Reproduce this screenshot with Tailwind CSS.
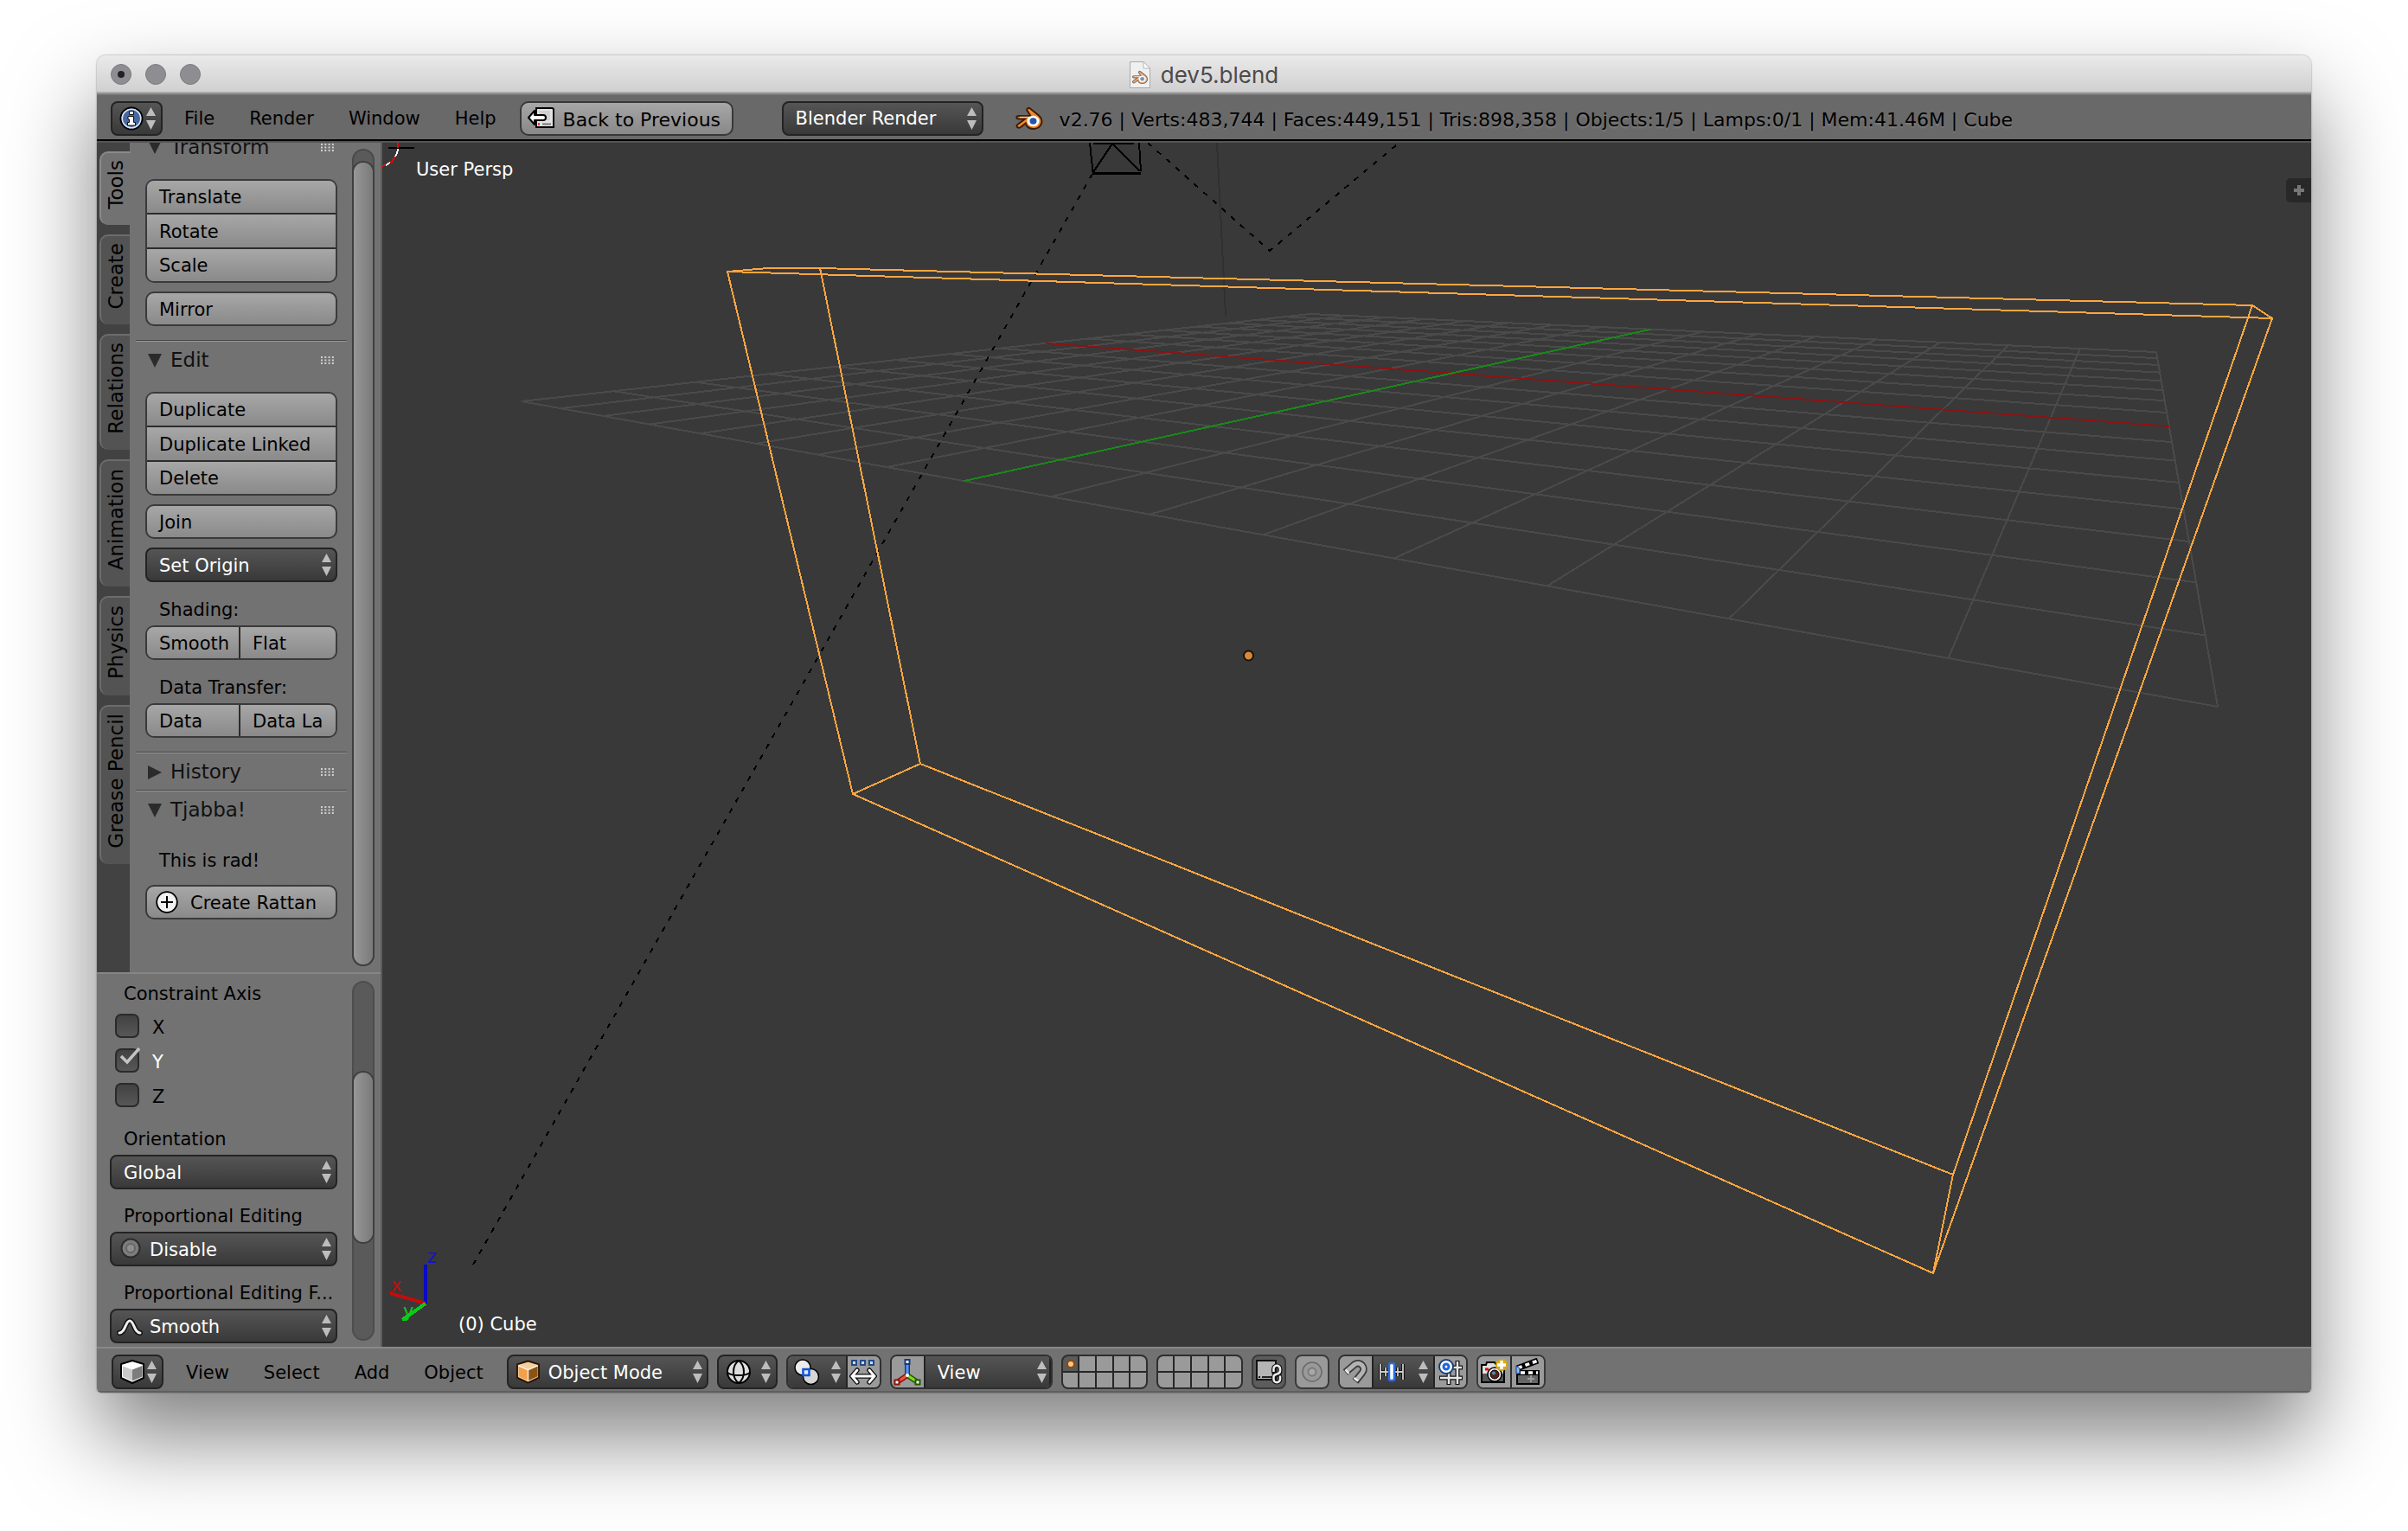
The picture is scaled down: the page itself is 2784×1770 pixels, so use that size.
<!DOCTYPE html>
<html lang="en">
  <head>
    <meta charset="UTF-8" />
    <title>dev5.blend</title>
    <script src="https://cdn.jsdelivr.net/npm/@tailwindcss/browser@4"></script>
  </head>
  <body class="min-h-screen bg-white font-['DejaVu_Sans',sans-serif] text-[21px] text-black">

    <!-- Shared shapes -->
    <svg class="hidden">
      <symbol id="arrows" viewBox="0 0 11 26">
        <path d="M5.5 0 11 10H0zM0 15h11L5.5 26z" fill="#bdbdbd" />
      </symbol>
      <symbol id="grip" viewBox="0 0 15 9">
        <path d="M0 1h15M0 4.5h15M0 8h15" stroke="#d0d0d0" stroke-width="2" stroke-dasharray="2 2.3" />
      </symbol>
      <symbol id="blender" viewBox="0 0 34 28">
        <path d="M18 2.500 28 10.500C32 14 32.500 19 29.500 22.500 26 27 18 27 14.500 23 13.500 22 13 20.500 12.800 19.500L7 24C4 26 1 23 3.500 21L12 14.500H5C1.500 14.500 1.500 11 5 11H18.500L15 5.500C13 3 16 .8 18 2.500Z" fill="#f5872b" stroke="#3b1d05" stroke-width="2" />
        <path d="M6 12.500h14" stroke="#ffc58a" stroke-width="1.500" />
        <ellipse cx="21.500" cy="17" rx="7" ry="6.200" fill="#fff" />
        <ellipse cx="21.500" cy="17" rx="4" ry="3.700" fill="#2456a6" />
      </symbol>
    </svg>

    <div class="min-h-screen overflow-hidden px-28 pt-16">
      <div class="flex h-[calc(100vh-224px)] flex-col overflow-hidden rounded-t-[10px] rounded-b-[5px] shadow-[0_50px_100px_rgba(0,0,0,0.5),0_0_2px_rgba(0,0,0,0.5)]">

        <!-- Title bar -->
        <header class="relative flex h-11 shrink-0 items-center justify-center gap-3 border-b-2 border-[#ababab] bg-linear-to-b from-[#ebeaeb] to-[#d0d0d0] pt-0.5">
          <div class="absolute left-4 flex gap-4">
            <button aria-label="Close" class="flex size-6 items-center justify-center rounded-full border border-[#7b7b7e] bg-[#8e8d91]"><span class="size-2 rounded-full bg-[#222]"></span></button>
            <button aria-label="Minimize" class="size-6 rounded-full border border-[#7b7b7e] bg-[#8e8d91]"></button>
            <button aria-label="Zoom" class="size-6 rounded-full border border-[#7b7b7e] bg-[#8e8d91]"></button>
          </div>
          <svg class="h-[31px] w-6" viewBox="0 0 24 31">
            <path d="M.5.500H16L23.500 8V30.500H.5z" fill="#f0f0f0" stroke="#a9a9a9" />
            <path d="M16 .5V8h7.500z" fill="#fff" stroke="#b5b5b5" />
            <use href="#blender" x="2" y="10" width="20" height="17" opacity="0.6" />
          </svg>
          <h1 class="font-['Inter',sans-serif] text-[26px] text-[#4b4a4c]">dev5.blend</h1>
        </header>

        <!-- Info header -->
        <div class="flex h-[55px] shrink-0 items-center border-t-2 border-b-2 border-t-[#7c7c7c] border-b-black bg-[#696969] pt-0.5 pl-4 whitespace-nowrap">
          <button aria-label="Editor type" class="flex h-10 w-[60px] items-center justify-between rounded-[8px] border-2 border-[#232323] bg-linear-to-b from-[#555] to-[#393939] pr-1.5 pl-2">
            <svg class="size-7" viewBox="0 0 28 28">
              <circle cx="14" cy="14" r="12.500" fill="#48699f" stroke="#000" stroke-width="2" />
              <circle cx="14" cy="14" r="10.800" fill="none" stroke="#d9e2f0" stroke-width="1.500" />
              <path d="M11.500 5.500h5v4h-5zM10 11.500h6.500v7h2V22H9.500v-3.500h2V15H10z" fill="#fff" stroke="#111" />
            </svg>
            <svg class="h-[26px] w-[11px]"><use href="#arrows" /></svg>
          </button>
          <nav class="mr-[7px] ml-[5px] flex pt-[3px]">
            <button class="px-5">File</button>
            <button class="px-5">Render</button>
            <button class="px-5">Window</button>
            <button class="px-5">Help</button>
          </nav>
          <button class="flex h-10 w-[247px] items-center gap-2.5 rounded-[10px] border-2 border-[#383838] bg-linear-to-b from-[#a7a7a7] to-[#888] pl-1.5 text-[22px]">
            <svg class="h-7 w-8" viewBox="0 0 32 28">
              <path d="M11 2H29a2 2 0 0 1 2 2V24H11z" fill="#e3e3e3" stroke="#000" stroke-width="2" />
              <path d="M14 5h13v11H14z" fill="#cfcfcf" />
              <path d="M18 20.500h10" stroke="#777" stroke-width="2" />
              <path d="M14 19v3" stroke="#f33" stroke-width="2" />
              <path d="M9 5 2 13l7 8v-5h10a3 3 0 0 0 0-6H9z" fill="#fff" stroke="#000" stroke-width="2" stroke-linejoin="round" />
            </svg>
            <span class="pt-[3px]">Back to Previous</span>
          </button>
          <div class="relative ml-14">
            <select aria-label="Render engine" class="h-10 w-[233px] appearance-none rounded-[8px] border-2 border-[#232323] bg-linear-to-b from-[#555] to-[#393939] pt-[3px] pl-3.5 text-white">
              <option>Blender Render</option>
            </select>
            <svg class="pointer-events-none absolute top-[7px] right-2 h-[26px] w-[11px]"><use href="#arrows" /></svg>
          </div>
          <svg class="ml-9 h-7 w-[34px]"><use href="#blender" /></svg>
          <p class="ml-[18px] pt-[3px] text-[22px] [text-shadow:0_2px_2px_rgba(255,255,255,0.15)]">v2.76 | Verts:483,744 | Faces:449,151 | Tris:898,358 | Objects:1/5 | Lamps:0/1 | Mem:41.46M | Cube</p>
        </div>

        <div class="flex min-h-0 flex-1 border-t-2 border-[#555]">
          <aside class="flex w-[330px] shrink-0 flex-col border-r-2 border-[#5c5c5c] bg-[#727272]">

            <!-- Tool shelf -->
            <section class="flex min-h-0 flex-1">
              <div class="flex w-[38px] shrink-0 flex-col gap-[11px] bg-[#424242] pt-2.5 pl-[3px] text-[23px] [text-shadow:0_0_3px_rgba(255,255,255,0.2)]" role="tablist">
                <button role="tab" class="h-[85px] w-9 rounded-l-[10px] border-t-2 border-l-2 border-[#8a8a8a] bg-[#727272]"><span class="rotate-180 [writing-mode:vertical-rl]">Tools</span></button>
                <button role="tab" class="h-[104px] rounded-l-[10px] border-t-2 border-l-2 border-[#6c6c6c] bg-[#535353]"><span class="rotate-180 [writing-mode:vertical-rl]">Create</span></button>
                <button role="tab" class="h-[134px] rounded-l-[10px] border-t-2 border-l-2 border-[#6c6c6c] bg-[#535353]"><span class="rotate-180 [writing-mode:vertical-rl]">Relations</span></button>
                <button role="tab" class="h-[147px] rounded-l-[10px] border-t-2 border-l-2 border-[#6c6c6c] bg-[#535353]"><span class="rotate-180 [writing-mode:vertical-rl]">Animation</span></button>
                <button role="tab" class="h-[115px] rounded-l-[10px] border-t-2 border-l-2 border-[#6c6c6c] bg-[#535353]"><span class="rotate-180 [writing-mode:vertical-rl]">Physics</span></button>
                <button role="tab" class="h-[184px] rounded-l-[10px] border-t-2 border-l-2 border-[#6c6c6c] bg-[#535353]"><span class="rotate-180 [writing-mode:vertical-rl]">Grease Pencil</span></button>
              </div>

              <div class="min-w-0 flex-1 overflow-hidden pl-[7px]">
                <!-- Transform -->
                <div class="-mt-[18px]">
                  <h2 class="flex h-11 items-center gap-2.5 pt-0.5 pr-[15px] pl-3.5 text-[23px] text-[#111]">
                    <svg class="size-4" viewBox="0 0 16 16"><path d="M0 0h16L8 16z" fill="#2b2b2b" /></svg>
                    Transform
                    <svg class="ml-auto h-[9px] w-[15px]"><use href="#grip" /></svg>
                  </h2>
                  <div class="flex flex-col gap-2.5 px-[11px] py-4">
                    <div class="flex h-30 flex-col divide-y-2 divide-[#2c2c2c] overflow-hidden rounded-[10px] border-2 border-[#3a3a3a]">
                      <button class="flex-1 bg-linear-to-b from-[#a7a7a7] to-[#8a8a8a] pt-[3px] pl-3.5 text-left">Translate</button>
                      <button class="flex-1 bg-linear-to-b from-[#a7a7a7] to-[#8a8a8a] pt-[3px] pl-3.5 text-left">Rotate</button>
                      <button class="flex-1 bg-linear-to-b from-[#a7a7a7] to-[#8a8a8a] pt-[3px] pl-3.5 text-left">Scale</button>
                    </div>
                    <button class="h-10 rounded-[10px] border-2 border-[#3a3a3a] bg-linear-to-b from-[#a7a7a7] to-[#8a8a8a] pt-[3px] pl-3.5 text-left">Mirror</button>
                  </div>
                </div>

                <!-- Edit -->
                <div class="border-t border-[#444] shadow-[inset_0_1px_0_#999]">
                  <h2 class="flex h-[43px] items-center gap-2.5 pt-0.5 pr-[15px] pl-3.5 text-[23px] text-[#111]">
                    <svg class="size-4" viewBox="0 0 16 16"><path d="M0 0h16L8 16z" fill="#2b2b2b" /></svg>
                    Edit
                    <svg class="ml-auto h-[9px] w-[15px]"><use href="#grip" /></svg>
                  </h2>
                  <div class="flex flex-col gap-2.5 px-[11px] py-4">
                    <div class="flex h-30 flex-col divide-y-2 divide-[#2c2c2c] overflow-hidden rounded-[10px] border-2 border-[#3a3a3a]">
                      <button class="flex-1 bg-linear-to-b from-[#a7a7a7] to-[#8a8a8a] pt-[3px] pl-3.5 text-left">Duplicate</button>
                      <button class="flex-1 bg-linear-to-b from-[#a7a7a7] to-[#8a8a8a] pt-[3px] pl-3.5 text-left">Duplicate Linked</button>
                      <button class="flex-1 bg-linear-to-b from-[#a7a7a7] to-[#8a8a8a] pt-[3px] pl-3.5 text-left">Delete</button>
                    </div>
                    <button class="h-10 rounded-[10px] border-2 border-[#3a3a3a] bg-linear-to-b from-[#a7a7a7] to-[#8a8a8a] pt-[3px] pl-3.5 text-left">Join</button>
                    <div class="relative">
                      <select aria-label="Set Origin" class="h-10 w-full appearance-none rounded-[8px] border-2 border-[#232323] bg-linear-to-b from-[#555] to-[#393939] pt-[3px] pl-3.5 text-white">
                        <option>Set Origin</option>
                      </select>
                      <svg class="pointer-events-none absolute top-[7px] right-[7px] h-[26px] w-[11px]"><use href="#arrows" /></svg>
                    </div>
                    <div>
                      <p class="h-10 pl-4 leading-[45px]">Shading:</p>
                      <div class="flex h-10 divide-x-2 divide-[#2c2c2c] overflow-hidden rounded-[10px] border-2 border-[#3a3a3a]">
                        <button class="w-[108px] bg-linear-to-b from-[#a7a7a7] to-[#8a8a8a] pt-[3px] pl-3.5 text-left">Smooth</button>
                        <button class="flex-1 bg-linear-to-b from-[#a7a7a7] to-[#8a8a8a] pt-[3px] pl-3.5 text-left">Flat</button>
                      </div>
                    </div>
                    <div>
                      <p class="h-10 pl-4 leading-[45px]">Data Transfer:</p>
                      <div class="flex h-10 divide-x-2 divide-[#2c2c2c] overflow-hidden rounded-[10px] border-2 border-[#3a3a3a] whitespace-nowrap">
                        <button class="w-[108px] bg-linear-to-b from-[#a7a7a7] to-[#8a8a8a] pt-[3px] pl-3.5 text-left">Data</button>
                        <button class="flex-1 bg-linear-to-b from-[#a7a7a7] to-[#8a8a8a] pt-[3px] pl-3.5 text-left">Data La</button>
                      </div>
                    </div>
                  </div>
                </div>

                <!-- History -->
                <div class="border-t border-[#444] shadow-[inset_0_1px_0_#999]">
                  <h2 class="flex h-[43px] items-center gap-2.5 pt-0.5 pr-[15px] pl-3.5 text-[23px] text-[#111]">
                    <svg class="size-4" viewBox="0 0 16 16"><path d="M0 0v16l16-8z" fill="#2b2b2b" /></svg>
                    History
                    <svg class="ml-auto h-[9px] w-[15px]"><use href="#grip" /></svg>
                  </h2>
                </div>

                <!-- Tjabba! -->
                <div class="border-t border-[#444] shadow-[inset_0_1px_0_#999]">
                  <h2 class="flex h-[43px] items-center gap-2.5 pt-0.5 pr-[15px] pl-3.5 text-[23px] text-[#111]">
                    <svg class="size-4" viewBox="0 0 16 16"><path d="M0 0h16L8 16z" fill="#2b2b2b" /></svg>
                    Tjabba!
                    <svg class="ml-auto h-[9px] w-[15px]"><use href="#grip" /></svg>
                  </h2>
                  <div class="flex flex-col gap-2.5 px-[11px] py-4">
                    <p class="h-10 pl-4 leading-[45px]">This is rad!</p>
                    <button class="flex h-10 items-center gap-3.5 rounded-[10px] border-2 border-[#3a3a3a] bg-linear-to-b from-[#a7a7a7] to-[#8a8a8a] pl-2.5 whitespace-nowrap">
                      <svg class="size-[26px] shrink-0" viewBox="0 0 26 26">
                        <circle cx="13" cy="13" r="11.800" fill="#f2f2f2" stroke="#000" stroke-width="1.800" />
                        <path d="M13 6v14M6 13h14" stroke="#000" stroke-width="2" />
                      </svg>
                      <span class="pt-[3px]">Create Rattan</span>
                    </button>
                  </div>
                </div>
              </div>

              <div class="mt-[7px] mr-[7px] mb-[7px] ml-1.5 w-[26px] shrink-0 rounded-full border-2 border-[#4a4a4a] bg-[#5a5a5a] pt-3.5">
                <div class="h-full rounded-full bg-linear-to-r from-[#979797] to-[#7a7a7a] shadow-[0_0_0_2px_#3f3f3f]"></div>
              </div>
            </section>

            <!-- Operator panel -->
            <section class="flex h-[433px] shrink-0 overflow-hidden border-t-2 border-[#868686]">
              <div class="flex min-w-0 flex-1 flex-col gap-[9px] pr-[11px] pl-[15px]">
                <fieldset>
                  <legend class="h-10 pl-4 leading-[47px]">Constraint Axis</legend>
                  <label class="flex h-10 items-center gap-[15px] pl-1.5">
                    <input type="checkbox" class="size-7 appearance-none rounded-[7px] border-2 border-[#2a2a2a] bg-linear-to-b from-[#424242] to-[#575757]" />
                    <span class="pt-[5px]">X</span>
                  </label>
                  <label class="relative flex h-10 items-center gap-[15px] pl-1.5 text-white">
                    <input type="checkbox" checked class="size-7 appearance-none rounded-[7px] border-2 border-[#2a2a2a] bg-linear-to-b from-[#424242] to-[#575757]" />
                    <span class="pt-[5px]">Y</span>
                    <svg class="absolute top-[5px] left-3 h-5 w-6" viewBox="0 0 24 20"><path d="M1 10l7 7L22 1" fill="none" stroke="#c4c4c4" stroke-width="3.500" /></svg>
                  </label>
                  <label class="flex h-10 items-center gap-[15px] pl-1.5">
                    <input type="checkbox" class="size-7 appearance-none rounded-[7px] border-2 border-[#2a2a2a] bg-linear-to-b from-[#424242] to-[#575757]" />
                    <span class="pt-[5px]">Z</span>
                  </label>
                </fieldset>
                <div>
                  <label for="orientation" class="block h-10 pl-4 leading-[45px]">Orientation</label>
                  <div class="relative">
                    <select id="orientation" class="h-10 w-full appearance-none rounded-[8px] border-2 border-[#232323] bg-linear-to-b from-[#555] to-[#393939] pt-[3px] pl-3.5 text-white">
                      <option>Global</option>
                    </select>
                    <svg class="pointer-events-none absolute top-[7px] right-[7px] h-[26px] w-[11px]"><use href="#arrows" /></svg>
                  </div>
                </div>
                <div>
                  <label for="proportional" class="block h-10 pl-4 leading-[45px]">Proportional Editing</label>
                  <div class="relative">
                    <select id="proportional" class="h-10 w-full appearance-none rounded-[8px] border-2 border-[#232323] bg-linear-to-b from-[#555] to-[#393939] pt-[3px] pl-11 text-white">
                      <option>Disable</option>
                    </select>
                    <svg class="pointer-events-none absolute top-[7px] left-3 size-6" viewBox="0 0 24 24">
                      <circle cx="12" cy="12" r="10.500" fill="#7c7c7c" stroke="#2c2c2c" stroke-width="2" />
                      <circle cx="12" cy="12" r="5" fill="#8f8f8f" stroke="#666" stroke-width="2" />
                    </svg>
                    <svg class="pointer-events-none absolute top-[7px] right-[7px] h-[26px] w-[11px]"><use href="#arrows" /></svg>
                  </div>
                </div>
                <div>
                  <label for="falloff" class="block h-10 pl-4 leading-[45px] whitespace-nowrap">Proportional Editing F...</label>
                  <div class="relative">
                    <select id="falloff" class="h-10 w-full appearance-none rounded-[8px] border-2 border-[#232323] bg-linear-to-b from-[#555] to-[#393939] pt-[3px] pl-11 text-white">
                      <option>Smooth</option>
                    </select>
                    <svg class="pointer-events-none absolute top-2.5 left-2 h-[22px] w-[30px]" viewBox="0 0 30 22" fill="none" stroke-linecap="round">
                      <path d="M3 18C10 18 10 4 15 4S20 18 27 18" stroke="#111" stroke-width="6" />
                      <path d="M3 18C10 18 10 4 15 4S20 18 27 18" stroke="#eee" stroke-width="3" />
                    </svg>
                    <svg class="pointer-events-none absolute top-[7px] right-[7px] h-[26px] w-[11px]"><use href="#arrows" /></svg>
                  </div>
                </div>
              </div>
              <div class="mt-2 mr-[7px] mb-[7px] ml-1.5 w-[26px] shrink-0 rounded-full border-2 border-[#4d4d4d] bg-[#5a5a5a] pt-[104px]">
                <div class="h-[196px] rounded-full bg-linear-to-r from-[#979797] to-[#7a7a7a] shadow-[0_0_0_2px_#3f3f3f]"></div>
              </div>
            </section>
          </aside>

          <!-- 3D viewport -->
          <main class="relative min-w-0 flex-1 overflow-hidden bg-[#393939] text-white">
            <svg class="absolute inset-0 size-full" viewBox="442 165 2230 1392" preserveAspectRatio="xMinYMin slice" fill="none" stroke-width="2" shape-rendering="crispEdges">
              <g id="floor" stroke="#4a4a4a"></g>
              <path d="M1407 165 1417 365" stroke="#303030" />
              <g stroke="#000">
                <path d="M1260 165 1263.500 199M1317 165 1319 198M1286 166 1264 199M1286 166 1318 198M1264 166h47" />
                <path d="M1263 200h56" stroke-width="3" />
                <path d="M1263 201 547 1462M1327 165 1468 290M1614 168 1468 290" stroke-dasharray="6 8.300" />
                <path d="M449 171h30" />
              </g>
              <path d="M460 165v6M457 181l-5 7M446 190l-4 2" stroke="#f00" />
              <path d="M460 172q0 5-3 9M451 188l-5 3" stroke="#fff" />
              <g stroke="#ffa640">
                <path d="M841 314 2627 368 2235 1472 986 918ZM948 310 2604 353 2258 1358 1064 883Z" />
                <path d="M841 314 888 310H948M2627 368 2604 353M2235 1472 2258 1358M986 918 1064 883" />
              </g>
              <circle cx="1443.500" cy="758" r="5.500" fill="#d38a3e" stroke="#1c1206" shape-rendering="auto" />
              <g stroke-width="4">
                <path d="M492 1507V1462" stroke="#0a0ac4" />
                <path d="M492 1507 451 1495" stroke="#c60b0b" />
                <path d="M492 1507 465 1526" stroke="#0bcc14" />
              </g>
              <g stroke="none" font-family="DejaVu Sans" font-size="21">
                <text x="494" y="1460" fill="#1414c4">z</text>
                <text x="452" y="1493" fill="#c60b0b">x</text>
                <text x="466" y="1523" fill="#0bcc14">y</text>
              </g>
            </svg>
            <p class="absolute top-4 left-[39px]">User Persp</p>
            <p class="absolute bottom-2.5 left-[88px]">(0) Cube</p>
            <button aria-label="Show properties" class="absolute top-[41px] right-0 flex h-7 w-[29px] items-center justify-center rounded-l-[5px] bg-[#282828]">
              <svg class="size-3" viewBox="0 0 12 12"><path d="M6 0v12M0 6h12" stroke="#767676" stroke-width="4" /></svg>
            </button>
          </main>
        </div>

        <!-- 3D view header -->
        <footer class="flex h-[53px] shrink-0 border-t-2 border-b-2 border-t-[#888] border-b-[#5f5f5f] bg-[#727272] pt-[7px] pl-[17px]">
          <button aria-label="Editor type" class="flex h-10 w-[60px] items-center justify-between rounded-[8px] border-2 border-[#232323] bg-linear-to-b from-[#555] to-[#393939] pr-1.5 pl-2">
            <svg class="size-7" viewBox="0 0 28 28">
              <path d="M14 1 27 5V21L14 27 1 21V5z" fill="#fff" stroke="#000" stroke-width="2" stroke-linejoin="round" />
              <path d="M3 7.500 14 11.500V24.500L3 19.500z" fill="#c9c9c9" />
              <path d="M14 11.500 25.500 7V19.500L14 24.500z" fill="#7d7d7d" />
            </svg>
            <svg class="h-[26px] w-[11px]"><use href="#arrows" /></svg>
          </button>
          <nav class="mr-[7px] ml-1.5 flex h-10 pt-1">
            <button class="px-5">View</button>
            <button class="px-5">Select</button>
            <button class="px-5">Add</button>
            <button class="px-5">Object</button>
          </nav>

          <div class="flex gap-2.5">
            <div class="relative">
              <select aria-label="Mode" class="h-10 w-[233px] appearance-none rounded-[8px] border-2 border-[#232323] bg-linear-to-b from-[#555] to-[#393939] pt-[3px] pl-[46px] text-white">
                <option>Object Mode</option>
              </select>
              <svg class="pointer-events-none absolute top-1.5 left-[11px] h-7 w-[27px]" viewBox="0 0 28 28">
                <path d="M14 1 27 5V21L14 27 1 21V5z" fill="#f6cfa0" stroke="#2a1500" stroke-width="2" stroke-linejoin="round" />
                <path d="M3 7.500 14 11.500V24.500L3 19.500z" fill="#f3a04c" />
                <path d="M14 11.500 25.500 7V19.500L14 24.500z" fill="#8d5213" />
                <path d="M2.500 6.500 14 11.500 25.500 6.500M14 11.500V25" fill="none" stroke="#fff0dc" stroke-width="1.500" />
              </svg>
              <svg class="pointer-events-none absolute top-[7px] right-[7px] h-[26px] w-[11px]"><use href="#arrows" /></svg>
            </div>

            <button aria-label="Viewport shading" class="flex h-10 w-[70px] items-center justify-between rounded-[8px] border-2 border-[#232323] bg-linear-to-b from-[#555] to-[#393939] pr-1.5 pl-2">
              <svg class="size-[30px]" viewBox="0 0 30 30" fill="none" stroke="#000" stroke-width="2">
                <circle cx="15" cy="15" r="13" fill="#dedede" />
                <path d="M15 2C7 8 7 22 15 28M15 2C23 8 23 22 15 28M2 16C8 20 22 20 28 16" />
              </svg>
              <svg class="h-[26px] w-[11px]"><use href="#arrows" /></svg>
            </button>

            <div class="flex h-10 divide-x-2 divide-[#232323] overflow-hidden rounded-[8px] border-2 border-[#303030]">
              <button aria-label="Pivot point" class="flex w-[69px] items-center justify-between bg-linear-to-b from-[#555] to-[#393939] pr-1.5 pl-1.5">
                <svg class="size-8" viewBox="0 0 32 32">
                  <circle cx="11" cy="11" r="9" fill="#ececec" stroke="#000" stroke-width="1.500" />
                  <circle cx="20.500" cy="21.500" r="9" fill="#d6d6d6" stroke="#000" stroke-width="1.500" />
                  <path d="M11.500 13h7v7h-7z" fill="#e8e8ff" stroke="#0b55d8" stroke-width="2.500" />
                </svg>
                <svg class="h-[26px] w-[11px]"><use href="#arrows" /></svg>
              </button>
              <button aria-label="Manipulate center points" class="flex w-[37px] items-center justify-center bg-[#9a9a9a]">
                <svg class="h-[30px] w-8" viewBox="0 0 32 30">
                  <path d="M3 2h5v5H3zM13 2h5v5h-5zM23 2h5v5h-5z" fill="#c4dcff" stroke="#234a86" stroke-width="2" />
                  <path d="M9 13 3 20l6 7M23 13l6 7-6 7M4 20h24" fill="none" stroke="#111" stroke-width="5.500" stroke-linecap="round" />
                  <path d="M9 13 3 20l6 7M23 13l6 7-6 7M4 20h24" fill="none" stroke="#fff" stroke-width="2.800" stroke-linecap="round" />
                </svg>
              </button>
            </div>

            <div class="relative flex h-10 w-[188px] divide-x-2 divide-[#232323] overflow-hidden rounded-[8px] border-2 border-[#303030]">
              <button aria-label="Manipulator" class="flex w-[39px] shrink-0 items-center justify-center bg-[#9a9a9a]">
                <svg class="size-8" viewBox="0 0 32 32">
                  <path d="M16 20 4 28" stroke="#8b150a" stroke-width="6" /><path d="M16 20 4 28" stroke="#f0553d" stroke-width="3" />
                  <path d="M16 20 28 28" stroke="#245800" stroke-width="6" /><path d="M16 20 28 28" stroke="#83dc1c" stroke-width="3" />
                  <path d="M16 20V4" stroke="#123a80" stroke-width="6" /><path d="M16 20V4" stroke="#5b97f2" stroke-width="3" />
                  <path d="M13.500 2h5v5h-5z" fill="#fff" stroke="#123a80" stroke-width="2" />
                  <path d="M1.500 25.500h5v5h-5z" fill="#fff" stroke="#8b150a" stroke-width="2" />
                  <path d="M25.500 25.500h5v5h-5z" fill="#fff" stroke="#245800" stroke-width="2" />
                  <circle cx="16" cy="20" r="2" fill="#fff" />
                </svg>
              </button>
              <select aria-label="Transform orientation" class="min-w-0 flex-1 appearance-none bg-linear-to-b from-[#555] to-[#393939] pt-[3px] pl-3.5 text-white">
                <option>View</option>
              </select>
              <svg class="pointer-events-none absolute top-[5px] right-[5px] h-[26px] w-[11px]"><use href="#arrows" /></svg>
            </div>

            <div class="grid h-10 w-25 grid-cols-5 grid-rows-2 gap-0.5 overflow-hidden rounded-[8px] border-2 border-[#2e2e2e] bg-[#262626]">
              <button aria-label="Layer 1" class="flex items-center justify-center bg-[#5a5a5a]"><span class="size-2.5 rounded-full border-2 border-[#8a4c0c] bg-[#ffc688]"></span></button>
              <button aria-label="Layer 2" class="bg-[#9a9a9a]"></button>
              <button aria-label="Layer 3" class="bg-[#9a9a9a]"></button>
              <button aria-label="Layer 4" class="bg-[#9a9a9a]"></button>
              <button aria-label="Layer 5" class="bg-[#9a9a9a]"></button>
              <button aria-label="Layer 11" class="bg-[#9a9a9a]"></button>
              <button aria-label="Layer 12" class="bg-[#9a9a9a]"></button>
              <button aria-label="Layer 13" class="bg-[#9a9a9a]"></button>
              <button aria-label="Layer 14" class="bg-[#9a9a9a]"></button>
              <button aria-label="Layer 15" class="bg-[#9a9a9a]"></button>
            </div>
            <div class="grid h-10 w-25 grid-cols-5 grid-rows-2 gap-0.5 overflow-hidden rounded-[8px] border-2 border-[#2e2e2e] bg-[#262626]">
              <button aria-label="Layer 6" class="bg-[#9a9a9a]"></button>
              <button aria-label="Layer 7" class="bg-[#9a9a9a]"></button>
              <button aria-label="Layer 8" class="bg-[#9a9a9a]"></button>
              <button aria-label="Layer 9" class="bg-[#9a9a9a]"></button>
              <button aria-label="Layer 10" class="bg-[#9a9a9a]"></button>
              <button aria-label="Layer 16" class="bg-[#9a9a9a]"></button>
              <button aria-label="Layer 17" class="bg-[#9a9a9a]"></button>
              <button aria-label="Layer 18" class="bg-[#9a9a9a]"></button>
              <button aria-label="Layer 19" class="bg-[#9a9a9a]"></button>
              <button aria-label="Layer 20" class="bg-[#9a9a9a]"></button>
            </div>

            <button aria-label="Lock camera and layers" class="flex size-10 items-center justify-center rounded-[8px] border-2 border-[#3a3a3a] bg-[#5c5c5c]">
              <svg class="h-[30px] w-8" viewBox="0 0 32 30" fill="none">
                <path d="M2 2h22v22H2z" fill="#b5b5b5" stroke="#111" stroke-width="2" />
                <path d="M4 21h18" stroke="#222" stroke-width="2" stroke-dasharray="2 2 20" />
                <rect x="21.500" y="8" width="7.500" height="10" rx="3.700" stroke="#111" stroke-width="5" />
                <rect x="21.500" y="18" width="7.500" height="9" rx="3.700" stroke="#111" stroke-width="5" />
                <path d="M21.500 15v-3.500a3.700 3.700 0 0 1 7.500 0V14q0 2.500-3.700 3.500M29 19.500v4a3.700 3.700 0 0 1-7.500 0V21q0-2.500 3.700-3.500" stroke="#eee" stroke-width="2.500" />
              </svg>
            </button>

            <button aria-label="Proportional editing" class="flex size-10 items-center justify-center rounded-[8px] border-2 border-[#3a3a3a] bg-[#9a9a9a]">
              <svg class="size-6" viewBox="0 0 24 24">
                <circle cx="12" cy="12" r="11" fill="#999" stroke="#6a6a6a" stroke-width="1.500" />
                <circle cx="12" cy="12" r="4.500" fill="#a8a8a8" stroke="#7c7c7c" stroke-width="2" />
              </svg>
            </button>

            <div class="flex h-10 divide-x-2 divide-[#232323] overflow-hidden rounded-[8px] border-2 border-[#303030]">
              <button aria-label="Snap" class="flex w-[39px] items-center justify-center bg-[#9a9a9a]">
                <svg class="size-[30px]" viewBox="0 0 30 30" fill="none">
                  <path d="M3.500 15.500 14 6.500C20 2 28 10 23 16L15 26" stroke="#3c3c3c" stroke-width="8.500" />
                  <path d="M5 14.200 14 6.500C20 2 28 10 23 16L16 24.700" stroke="#b4b4b4" stroke-width="5" />
                  <path d="M3.500 12.500l4 4.500M13.500 22l4.500 3.500" stroke="#eee" stroke-width="2.500" />
                </svg>
              </button>
              <button aria-label="Snap element" class="flex w-[71px] items-center justify-between bg-linear-to-b from-[#555] to-[#393939] px-1.5">
                <svg class="h-6 w-[30px]" viewBox="0 0 30 24">
                  <path d="M2 3v18M28 3v18M8 7v10M22 7v10M2 12h26" stroke="#111" stroke-width="4" />
                  <path d="M2 3v18M28 3v18M8 7v10M22 7v10M2 12h26" stroke="#ccc" stroke-width="1.800" />
                  <rect x="12" y="2" width="6" height="20" rx="2" fill="#fff" stroke="#2b6be0" stroke-width="2.500" />
                </svg>
                <svg class="h-[26px] w-[11px]"><use href="#arrows" /></svg>
              </button>
              <button aria-label="Snap target" class="flex w-[36px] items-center justify-center bg-[#9a9a9a]">
                <svg class="size-[30px]" viewBox="0 0 30 30">
                  <path d="M13 14v16M23 2v28M15 10h14M2 22h27" stroke="#111" stroke-width="5" />
                  <path d="M13 14v15M23 3v26M15 10h13M3 22h25" stroke="#e6e6e6" stroke-width="2.500" />
                  <circle cx="10" cy="9" r="8" fill="#fff" stroke="#16407f" stroke-width="2" />
                  <circle cx="10" cy="9" r="3" fill="#fff" stroke="#1c66e0" stroke-width="3" />
                </svg>
              </button>
            </div>

            <div class="flex h-10 divide-x-2 divide-[#2c2c2c] overflow-hidden rounded-[8px] border-2 border-[#3a3a3a]">
              <button aria-label="Render still" class="flex w-[39px] items-center justify-center bg-[#9a9a9a]">
                <svg class="h-[30px] w-8" viewBox="0 0 32 30">
                  <path d="M2 7H7L8 4H17L19 7H28V27H2z" fill="#e0e0e0" stroke="#000" stroke-width="2" />
                  <path d="M3 17h24v9H3z" fill="#555" />
                  <path d="M6 12h4" stroke="#e00" stroke-width="3" />
                  <circle cx="17" cy="18" r="8" fill="#eee" stroke="#000" stroke-width="1.500" />
                  <circle cx="17" cy="18" r="5" fill="#5a2018" stroke="#000" />
                  <circle cx="16" cy="16.500" r="2" fill="#6688aa" />
                  <circle cx="25" cy="7" r="7" fill="#d8a914" />
                  <path d="M25 2v10M20 7h10" stroke="#fff" stroke-width="3.500" />
                </svg>
              </button>
              <button aria-label="Render animation" class="flex w-[37px] items-center justify-center bg-[#9a9a9a]">
                <svg class="h-8 w-[30px]" viewBox="0 0 30 32">
                  <path d="M3 15h25v15H3z" fill="#666" stroke="#000" stroke-width="2" />
                  <path d="M3 12 27 3" stroke="#000" stroke-width="7" />
                  <path d="M4 11.500 27 3" stroke="#fff" stroke-width="3.500" stroke-dasharray="5 4" />
                  <path d="M4 17h24" stroke="#000" stroke-width="6" />
                  <path d="M7 17h20" stroke="#fff" stroke-width="3.500" stroke-dasharray="5 4" />
                  <path d="M2 9 6 12v6H2z" fill="#8db9ef" stroke="#123a80" />
                  <path d="M19 20v8M15 24h8" stroke="#999" stroke-width="2" />
                </svg>
              </button>
            </div>
          </div>
        </footer>
      </div>
    </div>

    <!-- Floor grid: 16 x 16 cells in perspective, each corner is [x, y, weight] -->
    <script>
      const near = [2564, 817, 0.353];
      const left = [603, 464, 1];
      const far = [1515, 363, 1.98];
      const right = [2493, 407, 1.333];

      function project(u, v) {
        const corners = [
          [left, (1 - u) * (1 - v)],
          [near, u * (1 - v)],
          [far, (1 - u) * v],
          [right, u * v],
        ];
        let x = 0, y = 0, w = 0;
        for (const [c, k] of corners) {
          x += c[0] * c[2] * k;
          y += c[1] * c[2] * k;
          w += c[2] * k;
        }
        return [x / w, y / w];
      }

      function addLine(a, b, color) {
        const line = document.createElementNS('http://www.w3.org/2000/svg', 'path');
        line.setAttribute('d', `M${project(...a)}L${project(...b)}`);
        if (color) line.setAttribute('stroke', color);
        document.getElementById('floor').append(line);
      }

      for (let i = 0; i <= 16; i++) {
        if (i === 8) continue;
        addLine([i / 16, 0], [i / 16, 1]);
        addLine([0, i / 16], [1, i / 16]);
      }
      addLine([0, 0.5], [1, 0.5], '#8a1414');
      addLine([0.5, 0], [0.5, 1], '#178a17');
    </script>
  </body>
</html>
